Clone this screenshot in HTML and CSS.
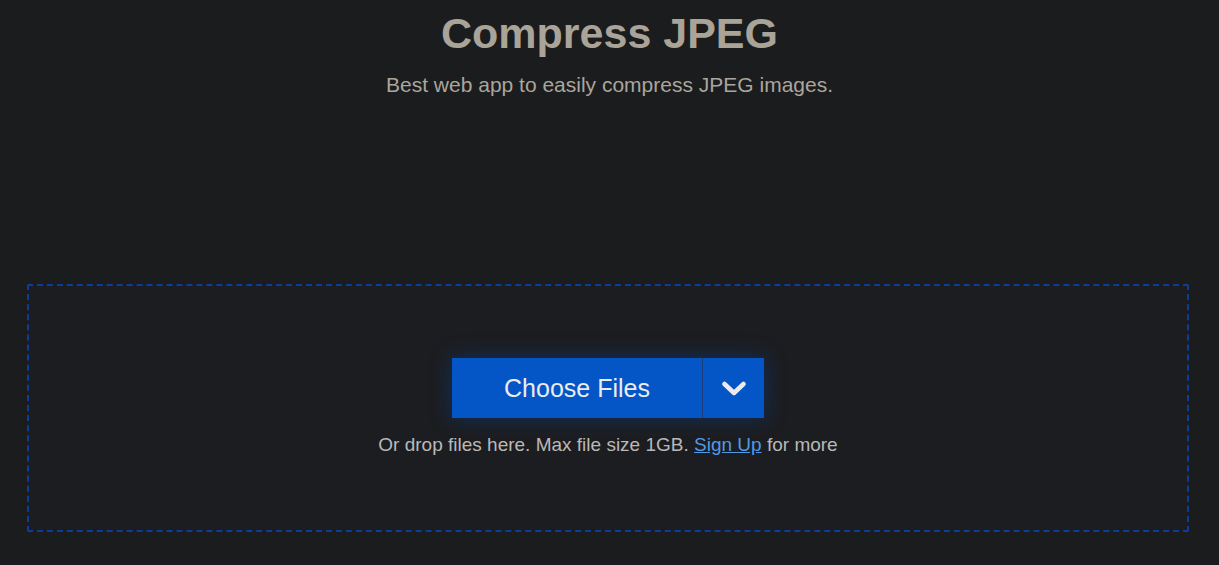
FILE: index.html
```html
<!DOCTYPE html>
<html lang="en">
<head>
  <meta charset="UTF-8">
  <title>Compress JPEG</title>
  <link rel="stylesheet" href="styles.css">
</head>
<body>

  <header class="kopf">
    <h1>Compress JPEG</h1>
    <p class="untertitel">Best web app to easily compress JPEG images.</p>
  </header>

  <div class="drop-zone">
    <div class="upload-btn">
      <button class="choose">Choose Files</button>
      <button class="more" aria-label="More options">
        <svg width="24" height="16" viewBox="0 0 24 16">
          <path d="M2.5 3 L12 12 L21.5 3" fill="none" stroke="#ececec" stroke-width="4.5" stroke-linecap="round" stroke-linejoin="round"/>
        </svg>
      </button>
    </div>
    <p class="hinweis">Or drop files here. Max file size 1GB. <a href="#">Sign Up</a> for more</p>
  </div>

</body>
</html>
```

FILE: styles.css
```css
body {
  font-family: 'Liberation Sans', Arial, sans-serif;
  background: #1b1c1e;
  margin: 0;
}

.kopf {
  text-align: center;
  padding-top: 9px;
}

.kopf h1 {
  margin: 0;
  font-size: 43px;
  font-weight: bold;
  color: #aaa398;
  line-height: 48px;
}

.untertitel {
  margin: 16px 0 0;
  font-size: 21px;
  color: #aaa69d;
  line-height: 24px;
}

.drop-zone {
  margin: 187px 30px 0 27px;
  height: 248px;
  box-sizing: border-box;
  border: 2px dashed #0b3d9c;
  border-radius: 2px;
  background: #1c1d20;
  display: flex;
  flex-direction: column;
  align-items: center;
  padding-top: 72px;
}

.upload-btn {
  display: flex;
  height: 60px;
  background: #0455c6;
  box-shadow: 0 0 22px rgba(4, 70, 170, 0.45);
}

.upload-btn button {
  background: none;
  border: none;
  color: #ececec;
  font-family: inherit;
  cursor: pointer;
  padding: 0;
}

.choose {
  width: 250px;
  font-size: 25px;
}

.more {
  width: 62px;
  border-left: 1px solid #1a3c78 !important;
  display: flex;
  align-items: center;
  justify-content: center;
  padding-top: 2px !important;
}

.hinweis {
  margin: 16px 0 0;
  font-size: 19px;
  color: #b9b9b9;
  line-height: 22px;
}

.hinweis a {
  color: #4f9ae6;
}
```
